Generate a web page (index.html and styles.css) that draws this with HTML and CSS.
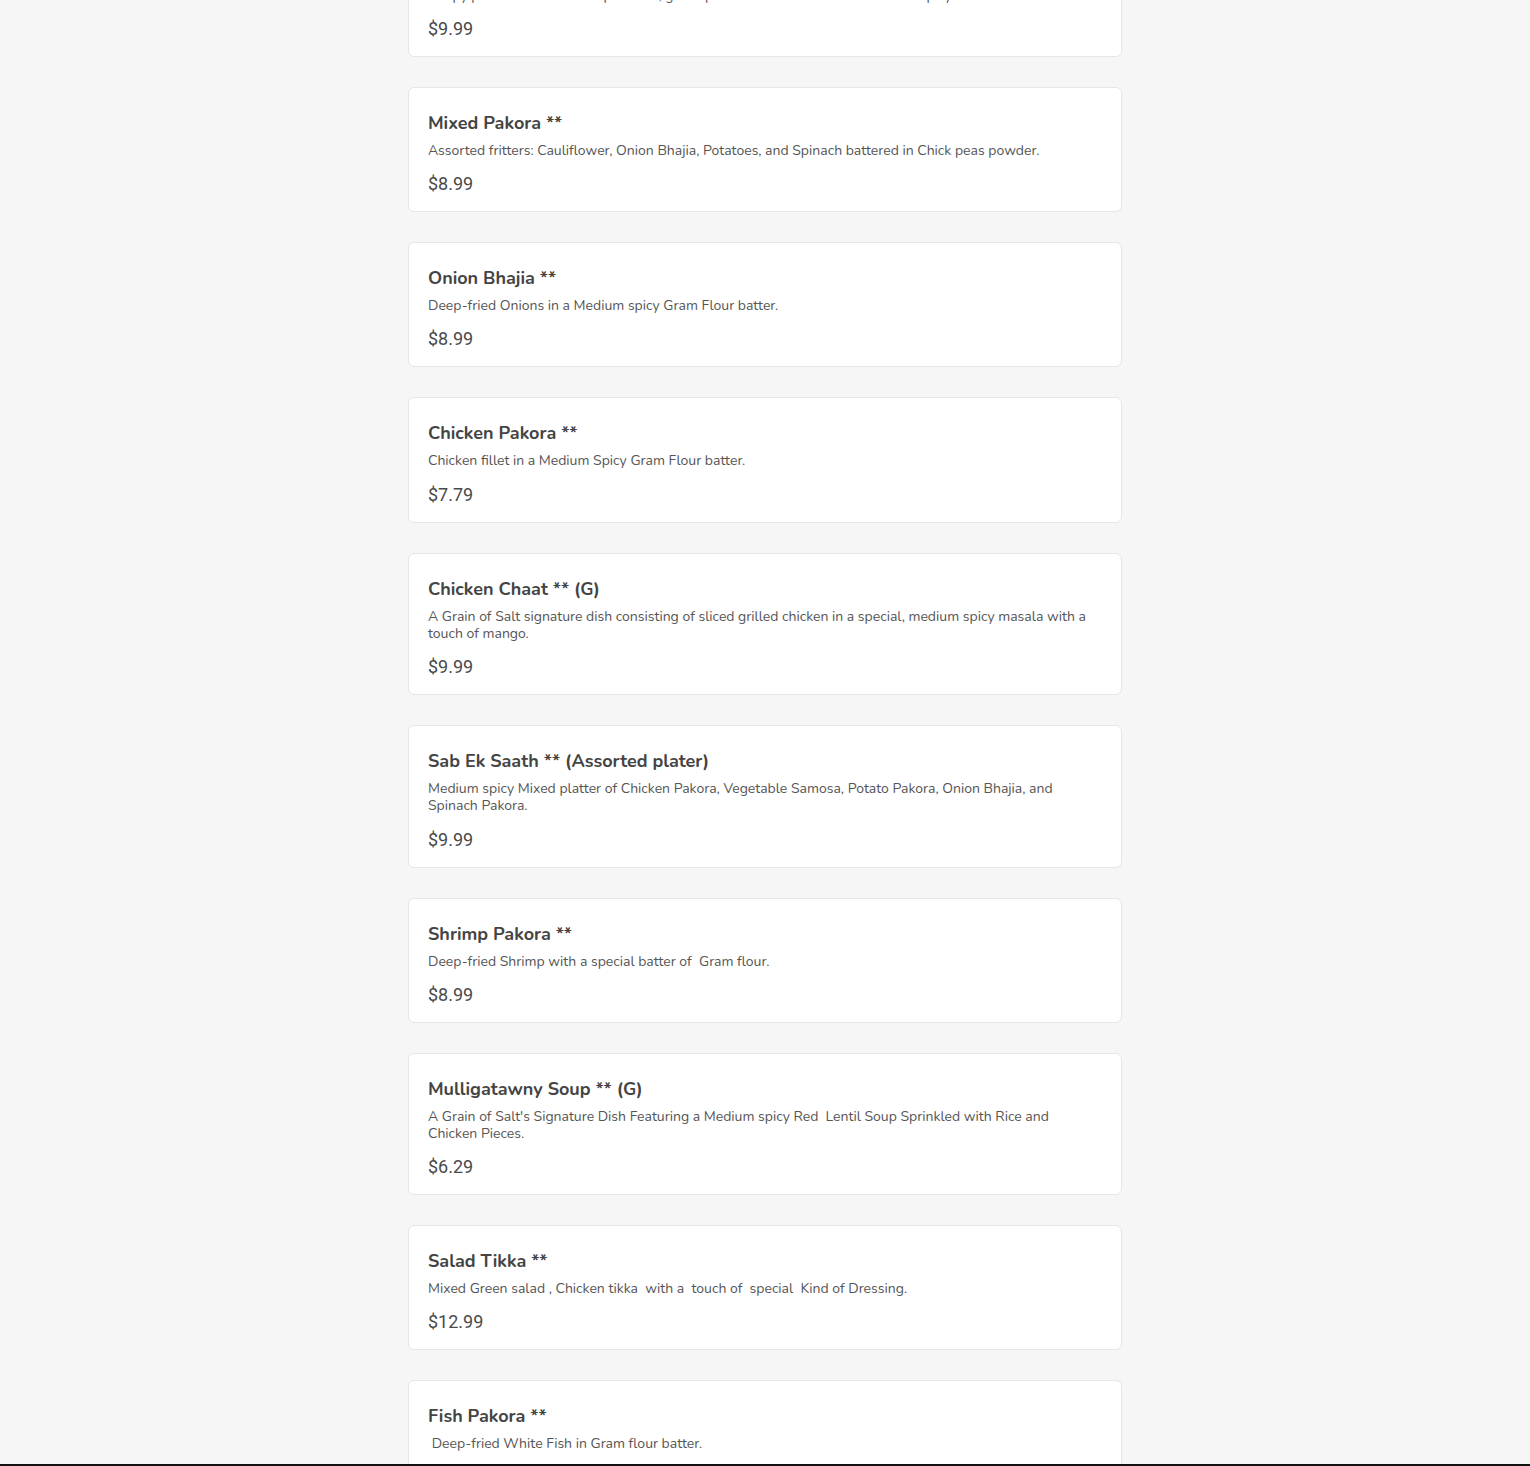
FILE: index.html
```html
<!DOCTYPE html>
<html lang="en">
<head>
<meta charset="utf-8">
<title>Menu</title>
<link rel="stylesheet" href="styles.css">
</head>
<body>
<main class="menu">
  <div class="item">
    <h3 class="item-title">Vegetable Samosa **</h3>
    <p class="item-desc">Crispy pastries stuffed with potatoes, green peas and fresh herbs in a Medium spicy.</p>
    <div class="item-price">$9.99</div>
  </div>
  <div class="item">
    <h3 class="item-title">Mixed Pakora **</h3>
    <p class="item-desc">Assorted fritters: Cauliflower, Onion Bhajia, Potatoes, and Spinach battered in Chick peas powder.</p>
    <div class="item-price">$8.99</div>
  </div>
  <div class="item">
    <h3 class="item-title">Onion Bhajia **</h3>
    <p class="item-desc">Deep-fried Onions in a Medium spicy Gram Flour batter.</p>
    <div class="item-price">$8.99</div>
  </div>
  <div class="item">
    <h3 class="item-title">Chicken Pakora **</h3>
    <p class="item-desc">Chicken fillet in a Medium Spicy Gram Flour batter.</p>
    <div class="item-price">$7.79</div>
  </div>
  <div class="item">
    <h3 class="item-title">Chicken Chaat ** (G)</h3>
    <p class="item-desc">A Grain of Salt signature dish consisting of sliced grilled chicken in a special, medium spicy masala with a touch of mango.</p>
    <div class="item-price">$9.99</div>
  </div>
  <div class="item">
    <h3 class="item-title">Sab Ek Saath ** (Assorted plater)</h3>
    <p class="item-desc">Medium spicy Mixed platter of Chicken Pakora, Vegetable Samosa, Potato Pakora, Onion Bhajia, and Spinach Pakora.</p>
    <div class="item-price">$9.99</div>
  </div>
  <div class="item">
    <h3 class="item-title">Shrimp Pakora **</h3>
    <p class="item-desc">Deep-fried Shrimp with a special batter of  Gram flour.</p>
    <div class="item-price">$8.99</div>
  </div>
  <div class="item">
    <h3 class="item-title">Mulligatawny Soup ** (G)</h3>
    <p class="item-desc">A Grain of Salt's Signature Dish Featuring a Medium spicy Red  Lentil Soup Sprinkled with Rice and Chicken Pieces.</p>
    <div class="item-price">$6.29</div>
  </div>
  <div class="item">
    <h3 class="item-title">Salad Tikka **</h3>
    <p class="item-desc">Mixed Green salad , Chicken tikka  with a  touch of  special  Kind of Dressing.</p>
    <div class="item-price">$12.99</div>
  </div>
  <div class="item">
    <h3 class="item-title">Fish Pakora **</h3>
    <p class="item-desc"> Deep-fried White Fish in Gram flour batter.</p>
    <div class="item-price">$9.99</div>
  </div>
</main>
<div class="bottom-bar"></div>
</body>
</html>
```
FILE: styles.css
```css
html, body {
  margin: 0;
  padding: 0;
  background: #f6f6f6;
}
body {
  font-family: "Nunito", "Lato", "Noto Sans", sans-serif;
  color: #444;
  overflow: hidden;
  height: 1466px;
}
.menu {
  width: 714px;
  margin: -68.4px auto 0;
  display: flex;
  flex-direction: column;
  gap: 30px;
}
.item {
  background: #fff;
  border: 1px solid #e6e6e6;
  border-radius: 6px;
  padding: 23px 24px 15px 19px;
}
.item-title {
  margin: 0;
  font-size: 18px;
  line-height: 24px;
  font-weight: 700;
  color: #444;
}
.item-desc {
  margin: 7px 0 0;
  font-size: 14px;
  line-height: 17.2px;
  color: #555;
  white-space: pre-wrap;
}
.item-price {
  margin-top: 13.05px;
  font-family: "Roboto", "Liberation Sans", Arial, sans-serif;
  font-size: 18px;
  line-height: 24px;
  color: #4a4a4a;
}
.bottom-bar {
  position: fixed;
  left: 0;
  right: 0;
  bottom: 0;
  height: 2px;
  background: #111;
}
```
